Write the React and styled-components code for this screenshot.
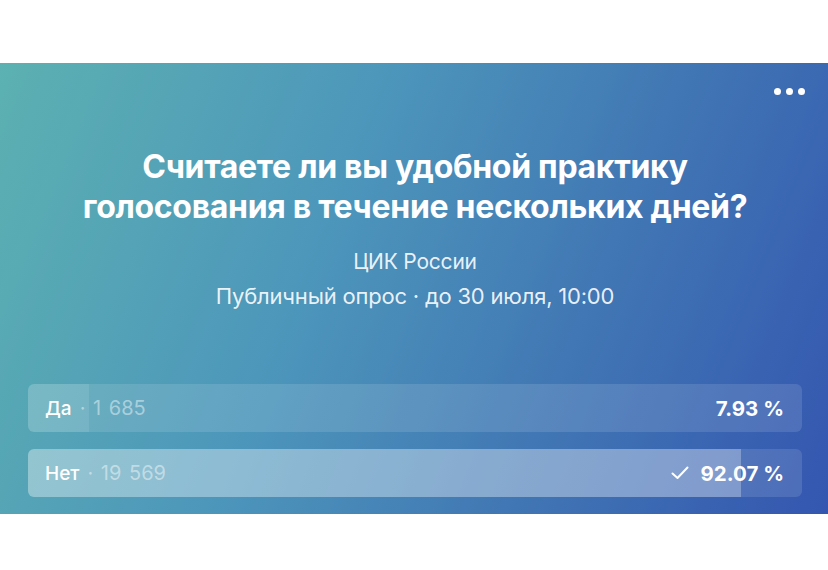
import React from 'react';
import styled, {createGlobalStyle} from 'styled-components';

const GlobalStyle = createGlobalStyle`
    html, body {
        margin: 0;
        padding: 0;
        background: #ffffff;
    }

    body {
        font-family: Inter, "Noto Sans", "Liberation Sans", sans-serif;
        -webkit-font-smoothing: antialiased;
    }
`;

const Page = styled.div`
    width: 828px;
    height: 570px;
    padding-top: 63px;
    box-sizing: border-box;
    background: #ffffff;
`;

const PollCard = styled.div`
    display: flex;
    flex-direction: column;
    height: 451px;
    box-sizing: border-box;
    padding: 25px 26px 16px 28px;
    color: #ffffff;
    background: linear-gradient(112deg, #5cb1b1 0%, #4d97bb 38%, #4177b4 68%, #3456b0 100%);
`;

const TopRow = styled.div`
    display: flex;
    justify-content: flex-end;
    margin-right: -3px;
`;

const MoreButton = styled.div`
    display: flex;
    gap: 5px;
    cursor: pointer;

    span {
        width: 7px;
        height: 7px;
        border-radius: 50%;
        background: #ffffff;
    }
`;

const Title = styled.h2`
    margin: 52px -28px 17px;
    font-size: 32px;
    line-height: 40px;
    font-weight: 700;
    text-align: center;
    letter-spacing: -0.3px;
`;

const MetaLine = styled.div`
    font-size: ${props => props.size || 18}px;
    line-height: 35px;
    text-align: center;
    color: rgba(255, 255, 255, 0.9);
    letter-spacing: -0.2px;
`;

const Options = styled.div`
    display: flex;
    flex-direction: column;
    gap: 17px;
    margin-top: 70px;
`;

const OptionBar = styled.div`
    position: relative;
    height: 48px;
    border-radius: 6px;
    overflow: hidden;
    background: rgba(255, 255, 255, 0.12);
`;

const OptionFill = styled.div`
    position: absolute;
    top: 0;
    bottom: 0;
    left: 0;
    background: rgba(255, 255, 255, ${props => props.$strong ? 0.28 : 0.1});
`;

const OptionContent = styled.div`
    position: relative;
    display: flex;
    align-items: center;
    height: 100%;
    padding: 0 18px 0 17px;
    font-size: 19px;
`;

const OptionLabel = styled.span`
    font-weight: 500;
`;

const OptionCount = styled.span`
    flex: 1;
    margin-left: 8px;
    font-size: 20px;
    word-spacing: 2px;
    color: rgba(255, 255, 255, 0.45);
`;

const Percent = styled.span`
    display: flex;
    align-items: center;
    gap: 11px;
    font-size: 20.5px;
    font-weight: 700;
`;

const CheckIcon = () => (
    <svg width="18" height="14" viewBox="0 0 18 14" fill="none">
        <polyline points="1.5,7.5 6.5,12 16.5,1.5" stroke="#ffffff" strokeWidth="2" strokeLinecap="round" strokeLinejoin="round"/>
    </svg>
);

const answers = [
    {label: 'Да', count: '1 685', percent: '7.93', voted: false},
    {label: 'Нет', count: '19 569', percent: '92.07', voted: true},
];

export default function App() {
    return (
        <Page>
            <GlobalStyle/>
            <PollCard>
                <TopRow>
                    <MoreButton>
                        <span/><span/><span/>
                    </MoreButton>
                </TopRow>
                <Title>
                    Считаете ли вы удобной практику<br/>
                    голосования в течение нескольких дней?
                </Title>
                <MetaLine size={21}>ЦИК России</MetaLine>
                <MetaLine size={22}>Публичный опрос · до 30 июля, 10:00</MetaLine>
                <Options>
                    {answers.map(answer => (
                        <OptionBar key={answer.label}>
                            <OptionFill $strong={answer.voted} style={{width: `${answer.percent}%`}}/>
                            <OptionContent>
                                <OptionLabel>{answer.label}</OptionLabel>
                                <OptionCount>· {answer.count}</OptionCount>
                                <Percent>
                                    {answer.voted && <CheckIcon/>}
                                    {answer.percent} %
                                </Percent>
                            </OptionContent>
                        </OptionBar>
                    ))}
                </Options>
            </PollCard>
        </Page>
    );
}
